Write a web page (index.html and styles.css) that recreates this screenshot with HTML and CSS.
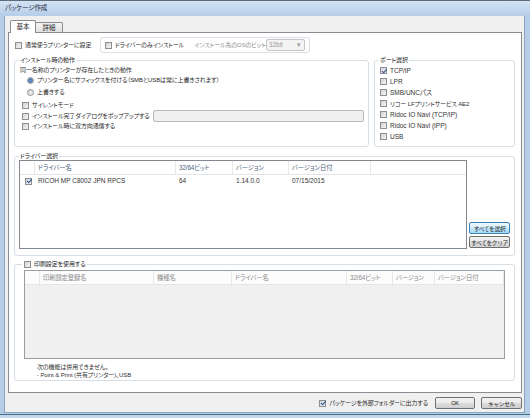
FILE: index.html
```html
<!DOCTYPE html>
<html lang="ja">
<head>
    <meta charset="UTF-8">
    <meta name="viewport" content="width=device-width, initial-scale=1.0">
    <title>パッケージ作成</title>
    <link rel="stylesheet" href="styles.css">
</head>
<body>

<div class="window">
    <div class="titlebar">パッケージ作成</div>

    <div class="client">
        <div class="tabs">
            <span class="tab active">基本</span>
            <span class="tab">詳細</span>
        </div>

        <div class="panel">
            <div class="toprow">
                <label class="check first"><span class="cb"></span>通常使うプリンターに設定</label>
                <div class="drvonly">
                    <label class="check"><span class="cb"></span>ドライバーのみインストール</label>
                    <span class="dim ostext">インストール先のOSのビット</span>
                    <span class="combo latin">32bit<span class="arrow">▾</span></span>
                </div>
            </div>

            <div class="grouprow">
                <fieldset class="group install">
                    <legend>インストール時の動作</legend>
                    <div class="line plain">同一名称のプリンターが存在したときの動作</div>
                    <label class="line check radio"><span class="rb on"></span>プリンター名にサフィックスを付ける（SMBとUSBは常に上書きされます）</label>
                    <label class="line check radio second"><span class="rb"></span>上書きする</label>
                    <label class="line check opt silent"><span class="cb"></span>サイレントモード</label>
                    <div class="line check opt popup">
                        <span class="cb"></span>インストール完了ダイアログをポップアップする
                        <span class="textbox"></span>
                    </div>
                    <label class="line check opt"><span class="cb"></span>インストール時に双方向通信する</label>
                </fieldset>

                <fieldset class="group port">
                    <legend>ポート選択</legend>
                    <label class="pline check latin"><span class="cb on"></span>TCP/IP</label>
                    <label class="pline check latin"><span class="cb"></span>LPR</label>
                    <label class="pline check latin"><span class="cb"></span>SMB/UNCパス</label>
                    <label class="pline check"><span class="cb"></span>リコー LFプリントサービス AE2</label>
                    <label class="pline check latin"><span class="cb"></span>Ridoc IO Navi (TCP/IP)</label>
                    <label class="pline check latin"><span class="cb"></span>Ridoc IO Navi (IPP)</label>
                    <label class="pline check latin"><span class="cb"></span>USB</label>
                </fieldset>
            </div>

            <fieldset class="group driver">
                <legend>ドライバー選択</legend>
                <div class="drvbody">
                    <div class="listview drivers">
                        <div class="lv-head">
                            <span></span>
                            <span>ドライバー名</span>
                            <span>32/64ビット</span>
                            <span>バージョン</span>
                            <span>バージョン日付</span>
                        </div>
                        <div class="lv-row latin">
                            <span><span class="cb on"></span></span>
                            <span>RICOH MP C8002 JPN RPCS</span>
                            <span>64</span>
                            <span>1.14.0.0</span>
                            <span>07/15/2015</span>
                        </div>
                    </div>
                    <div class="btncol">
                        <button class="btn focus">すべてを選択</button>
                        <button class="btn">すべてをクリア</button>
                    </div>
                </div>
            </fieldset>

            <fieldset class="group preset">
                <legend><label class="check"><span class="cb"></span>印刷設定を使用する</label></legend>
                <div class="listview presets">
                    <div class="lv-head">
                        <span></span>
                        <span>印刷設定登録名</span>
                        <span>機種名</span>
                        <span>ドライバー名</span>
                        <span>32/64ビット</span>
                        <span>バージョン</span>
                        <span>バージョン日付</span>
                    </div>
                </div>
                <p class="note">次の機能は併用できません。<br>- Point &amp; Print (共有プリンター)、USB</p>
            </fieldset>
        </div>

        <div class="footer">
            <label class="check"><span class="cb on"></span>パッケージを外部フォルダーに出力する</label>
            <button class="btn ok latin">OK</button>
            <button class="btn cancel">キャンセル</button>
        </div>
    </div>
</div>

</body>
</html>
```

FILE: styles.css
```css
* {
    box-sizing: border-box;
}
body {
    margin: 0;
    font-family: "Liberation Sans", "Noto Sans CJK JP", sans-serif;
    font-size: 6px;
    line-height: 8px;
    letter-spacing: -0.1px;
    color: #2b2b2b;
    font-feature-settings: "palt";
}
.latin {
    font-size: 6.5px;
    letter-spacing: 0;
    color: #333;
}

/* window frame */
.window {
    width: 530px;
    height: 418px;
    background: #b6cde9;
    border-top: 1px solid #5f6b7a;
    box-shadow: inset 0 -3px 0 #c3d7ee, inset 0 -4px 0 #3f7287;
    overflow: hidden;
}
.titlebar {
    height: 15px;
    padding: 3px 0 0 5px;
    background: linear-gradient(#d3e3f5, #b6cde9);
    font-size: 6.5px;
    color: #1e2a38;
}
.client {
    height: 397px;
    margin: 0 5px 0 4px;
    background: #f0f0f0;
    border: 1px solid #8fa3ba;
    border-top: none;
}

/* tabs */
.tabs {
    display: flex;
    align-items: flex-end;
    height: 16px;
    padding-left: 5px;
    font-size: 6.5px;
}
.tab {
    display: flex;
    align-items: center;
    justify-content: center;
    width: 28px;
    height: 10px;
    margin-left: -1px;
    border: 1px solid #898c95;
    border-bottom: none;
    border-radius: 2px 2px 0 0;
    background: linear-gradient(#f3f3f3, #e1e1e1);
}
.tab.active {
    width: 26px;
    height: 13px;
    margin-left: 0;
    margin-bottom: -1px;
    background: #fff;
    position: relative;
    z-index: 1;
}
.panel {
    width: 514px;
    height: 361px;
    margin-left: 3px;
    border: 1px solid #898c95;
    background: #fff;
    padding: 4px 6px 0 5px;
}

/* check boxes and radios */
.check {
    display: flex;
    align-items: center;
    gap: 3px;
    white-space: nowrap;
}
.cb {
    display: block;
    flex: none;
    width: 7px;
    height: 7px;
    border: 1px solid #8e8f8f;
    background: linear-gradient(135deg, #cfd2d7, #f6f6f6);
    position: relative;
}
.cb.on::after {
    content: "";
    position: absolute;
    left: 1.5px;
    top: -0.5px;
    width: 2px;
    height: 3.5px;
    border: solid #2b4a88;
    border-width: 0 1.2px 1.2px 0;
    transform: rotate(40deg);
}
.rb {
    display: block;
    flex: none;
    width: 7px;
    height: 7px;
    border-radius: 50%;
    border: 1px solid #8e8f8f;
    background: linear-gradient(135deg, #cfd2d7, #f6f6f6);
}
.rb.on {
    background: radial-gradient(circle, #7eb1e4 0, #2f62a6 1.8px, #dde2e8 2.6px);
}
.dim {
    color: #8d8d8d;
    white-space: nowrap;
}

/* top row */
.toprow {
    display: flex;
    align-items: center;
    height: 16px;
}
.toprow .first {
    width: 85px;
    margin-left: 1px;
}
.drvonly {
    display: flex;
    align-items: center;
    width: 210px;
    height: 16px;
    padding: 0 4px;
    border: 1px solid #dcdfe3;
    border-radius: 3px;
}
.ostext {
    margin-left: 10px;
}
.combo {
    display: flex;
    align-items: center;
    justify-content: space-between;
    width: 40px;
    height: 12px;
    margin-left: auto;
    padding: 0 3px 0 2px;
    border: 1px solid #c3c5c8;
    border-radius: 2px;
    background: #f4f4f4;
    color: #9a9a9a;
}

/* group boxes */
.group {
    margin: 0;
    padding: 0 4px;
    min-width: 0;
    border: 1px solid #d5dfe5;
    border-radius: 3px;
}
.group legend {
    padding: 0 1px;
    line-height: 8px;
    color: #222;
}
.grouprow {
    display: flex;
    gap: 5px;
    height: 91px;
    margin-top: 3px;
}
.install {
    width: 355px;
}
.port {
    flex: 1;
    padding-top: 1px;
}
.line {
    display: flex;
    align-items: center;
    height: 10px;
}
.plain {
    margin-top: 1px;
    padding-left: 1px;
}
.radio {
    margin-left: 8px;
}
.radio.second {
    margin-top: 2px;
}
.opt {
    margin-left: 3px;
}
.silent {
    margin-top: 3px;
}
.popup {
    margin-top: 1px;
}
.textbox {
    width: 213px;
    height: 12px;
    margin-left: auto;
    border: 1px solid #b5b8bc;
    border-radius: 2px;
    background: #f0f0f0;
}
.pline {
    height: 11px;
    margin-left: 1px;
}

/* list views */
.listview {
    border: 1px solid #828790;
    background: #fff;
}
.lv-head,
.lv-row {
    display: grid;
}
.lv-head {
    height: 14px;
    border-bottom: 1px solid #e3e5e8;
    color: #4c607a;
    font-size: 6.3px;
}
.lv-head span {
    display: flex;
    align-items: center;
    padding-left: 3px;
    border-right: 1px solid #e8e8e8;
    white-space: nowrap;
}
.lv-row {
    height: 12px;
    align-items: center;
}
.lv-row > span {
    padding-left: 3px;
    white-space: nowrap;
}
.lv-row > span:first-child {
    padding-left: 5px;
}

.driver {
    height: 104px;
    margin-top: 5px;
}
.drvbody {
    display: flex;
    align-items: flex-end;
    gap: 2px;
}
.drivers {
    width: 448px;
    height: 89px;
}
.drivers .lv-head,
.drivers .lv-row {
    grid-template-columns: 15px 141px 57px 56px 82px;
}
.btncol {
    display: flex;
    flex-direction: column;
    gap: 2px;
    margin-bottom: 1px;
}
.btn {
    display: flex;
    align-items: center;
    justify-content: center;
    height: 12px;
    padding: 0;
    border: 1px solid #707070;
    border-radius: 2px;
    background: linear-gradient(#f2f2f2, #ebebeb 50%, #dddddd 50%, #cfcfcf);
    font-family: inherit;
    font-size: 5.7px;
    letter-spacing: -0.3px;
    color: #222;
    white-space: nowrap;
}
.btncol .btn {
    width: 41px;
}
.btn.focus {
    border-color: #3c7fb1;
    background: linear-gradient(#eaf6fd, #d9f0fc 50%, #bee6fd 50%, #a7d9f5);
}

.preset {
    height: 121px;
    margin-top: 4px;
    padding: 0 9px;
}
.preset legend {
    margin-left: -2px;
    padding: 0 2px;
}
.presets {
    width: 481px;
    height: 89px;
    margin-top: 2px;
    border-color: #9a9ea3;
    background: #f0f0f0;
}
.presets .lv-head {
    grid-template-columns: 15px 114px 78px 115px 46px 42px 1fr;
    background: #fcfcfc;
    color: #8a8a8a;
}
.note {
    margin: 4px 0 0 13px;
    color: #333;
}

/* bottom buttons */
.footer {
    display: flex;
    align-items: center;
    justify-content: flex-end;
    height: 20px;
    padding-right: 2px;
}
.footer .ok {
    width: 40px;
    margin-left: 7px;
}
.footer .cancel {
    width: 41px;
    margin-left: 6px;
}
```
